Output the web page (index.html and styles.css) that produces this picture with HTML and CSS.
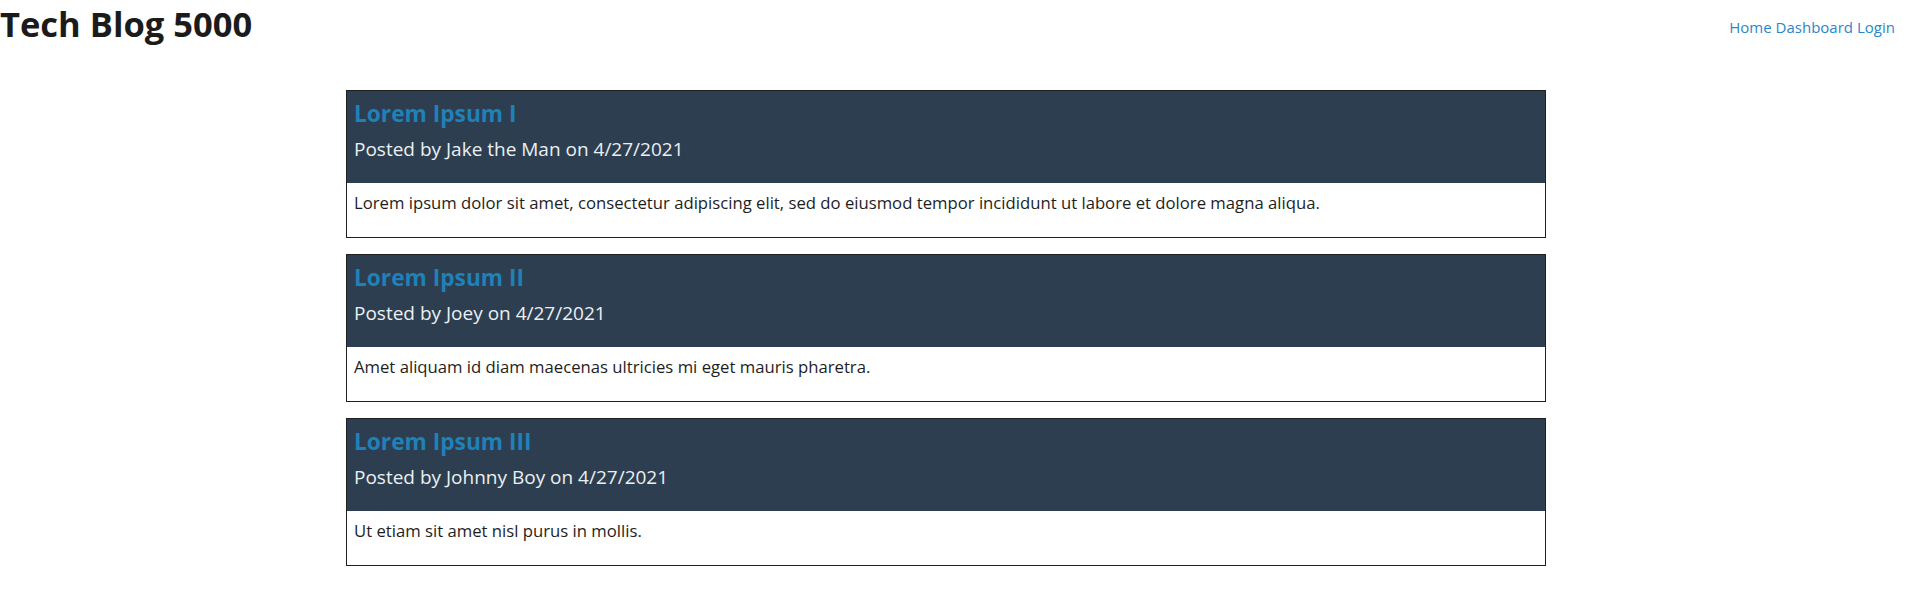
FILE: index.html
```html
<!DOCTYPE html>
<html lang="en">
<head>
<meta charset="utf-8">
<title>Tech Blog 5000</title>
<link rel="stylesheet" href="styles.css">
</head>
<body>
<header class="site-header">
  <h1 class="site-title">Tech Blog 5000</h1>
  <nav class="site-nav">
    <a href="#">Home</a>
    <a href="#">Dashboard</a>
    <a href="#">Login</a>
  </nav>
</header>
<main class="posts">
  <article class="post">
    <div class="post-head">
      <h2 class="post-title">Lorem Ipsum I</h2>
      <p class="post-meta">Posted by Jake the Man on 4/27/2021</p>
    </div>
    <div class="post-body">
      <p>Lorem ipsum dolor sit amet, consectetur adipiscing elit, sed do eiusmod tempor incididunt ut labore et dolore magna aliqua.</p>
    </div>
  </article>
  <article class="post">
    <div class="post-head">
      <h2 class="post-title">Lorem Ipsum II</h2>
      <p class="post-meta">Posted by Joey on 4/27/2021</p>
    </div>
    <div class="post-body">
      <p>Amet aliquam id diam maecenas ultricies mi eget mauris pharetra.</p>
    </div>
  </article>
  <article class="post">
    <div class="post-head">
      <h2 class="post-title">Lorem Ipsum III</h2>
      <p class="post-meta">Posted by Johnny Boy on 4/27/2021</p>
    </div>
    <div class="post-body">
      <p>Ut etiam sit amet nisl purus in mollis.</p>
    </div>
  </article>
</main>
</body>
</html>
```
FILE: styles.css
```css
* { box-sizing: border-box; }
html, body { margin: 0; padding: 0; background: #fff; }
body {
  font-family: "Open Sans", "Noto Sans", sans-serif;
  color: #1d1d1d;
}
.site-header {
  display: flex;
  justify-content: space-between;
  align-items: flex-start;
  height: 90px;
  padding-right: 11px;
}
.site-title {
  margin: 0;
  padding-top: 2px;
  font-size: 34.5px;
  line-height: 44px;
  font-weight: 700;
  color: #1b1b1b;
}
.site-nav {
  display: flex;
  gap: 4px;
  padding-top: 17px;
  font-size: 15px;
  line-height: 20px;
}
.site-nav a {
  color: #2a87c9;
  text-decoration: none;
}
.posts {
  display: flex;
  flex-direction: column;
  gap: 16px;
  width: 1200px;
  margin-left: 346px;
}
.post {
  border: 1px solid #1f1f1f;
}
.post-head {
  background: #2d3e50;
  height: 92px;
  padding: 8px 7px 0;
}
.post-title {
  margin: 0;
  font-size: 22.7px;
  line-height: 30px;
  font-weight: 700;
  color: #1f81b9;
}
.post-meta {
  margin: 7px 0 0;
  font-size: 19px;
  line-height: 26px;
  color: #eaf0f2;
}
.post-body {
  height: 54px;
  padding: 8.5px 7px 0;
}
.post-body p {
  margin: 0;
  font-size: 16.7px;
  line-height: 22px;
  color: #1e1e1e;
}
```
